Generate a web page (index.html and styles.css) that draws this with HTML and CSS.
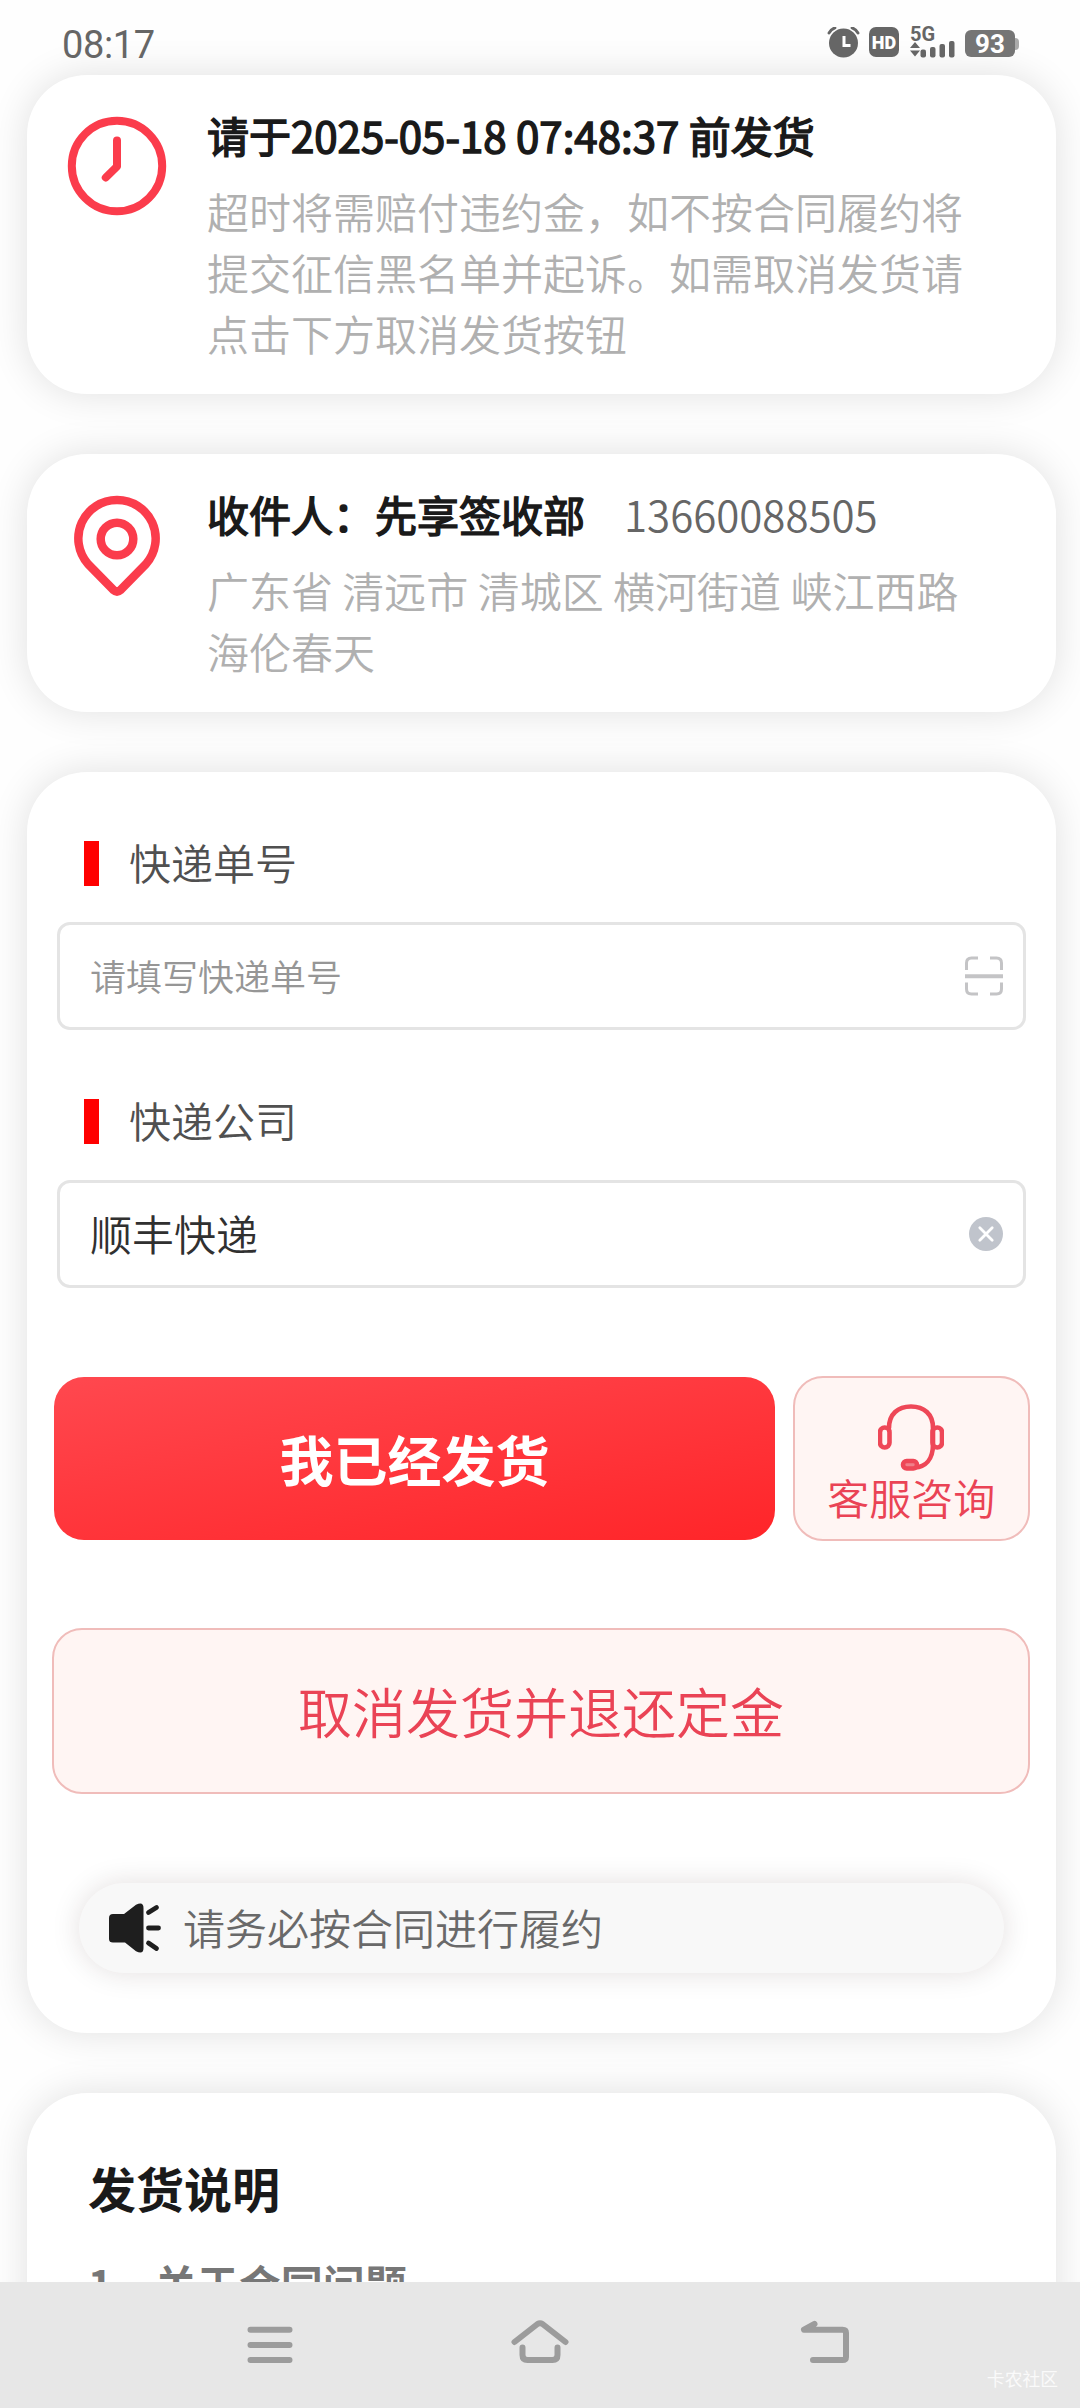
FILE: index.html
```html
<!DOCTYPE html>
<html lang="zh-CN">
<head>
<meta charset="utf-8">
<title>发货</title>
<link rel="stylesheet" href="styles.css">
</head>
<body>
<div class="screen">
  <header class="status">
    <span class="time">08:17</span>
    <div class="status-icons">
      <svg class="alarm" width="33" height="33" viewBox="0 0 33 33">
        <circle cx="16.5" cy="16" r="14.500" fill="#666"/>
        <path d="M2 6Q4 2 8 0.800M31 6Q29 2 25 0.800" fill="none" stroke="#666" stroke-width="2.800" stroke-linecap="round"/>
        <path d="M17 9V18.500H23.500" fill="none" stroke="#fff" stroke-width="3"/>
      </svg>
      <span class="hd">HD</span>
      <div class="signal">
        <span class="net">5G</span>
        <svg width="46" height="17" viewBox="0 0 46 17">
          <path d="M0 7L5 1L10 7ZM0 9.500H10L5 15.500Z" fill="#666"/>
          <rect x="10.500" y="8.500" width="5.500" height="8" rx="2" fill="#666"/>
          <rect x="20" y="6" width="5.500" height="10.500" rx="2" fill="#666"/>
          <rect x="29.500" y="3" width="5.500" height="13.500" rx="2" fill="#666"/>
          <rect x="39" y="0" width="5.500" height="16.500" rx="2" fill="#666"/>
        </svg>
      </div>
      <div class="battery"><span class="level">93</span><span class="cap"></span></div>
    </div>
  </header>

  <section class="card info">
    <svg class="info-icon" width="100" height="100" viewBox="0 0 100 100" fill="none" stroke="#fb3c4c" stroke-width="8" stroke-linecap="round" stroke-linejoin="round">
      <circle cx="50" cy="50" r="45.200"/>
      <path d="M50 24.500V50.500L38.800 61.500"/>
    </svg>
    <div class="info-body">
      <h2 class="info-title">请于2025-05-18 07:48:37 前发货</h2>
      <p class="info-text">超时将需赔付违约金，如不按合同履约将<br>提交征信黑名单并起诉。如需取消发货请<br>点击下方取消发货按钮</p>
    </div>
  </section>

  <section class="card info">
    <svg class="info-icon" width="100" height="102" viewBox="0 0 100 102" fill="none" stroke="#fb3c4c" stroke-width="8.500" stroke-linecap="round" stroke-linejoin="round">
      <path d="M50 5A38.500 38.500 0 0 0 21 69L46.500 95Q50 98 53.500 95L79 69A38.500 38.500 0 0 0 50 5Z"/>
      <circle cx="50" cy="44" r="16.300"/>
    </svg>
    <div class="info-body">
      <h2 class="info-title">收件人：先享签收部<span class="phone">13660088505</span></h2>
      <p class="info-text">广东省 清远市 清城区 横河街道 峡江西路<br>海伦春天</p>
    </div>
  </section>

  <section class="card form">
    <div class="label">快递单号</div>
    <div class="field">
      <span class="placeholder">请填写快递单号</span>
      <svg width="38" height="40" viewBox="0 0 38 40" fill="none" stroke="#c4c4c6" stroke-width="3">
        <path d="M1.500 14V7Q1.500 2 6.500 2H13M25 2H31.500Q36.500 2 36.500 7V14M1.500 26.500V33Q1.500 38 6.500 38H13M25 38H31.500Q36.500 38 36.500 33V26.500"/>
        <path d="M0 20.200H38" stroke-width="4"/>
      </svg>
    </div>
    <div class="label">快递公司</div>
    <div class="field">
      <span class="value">顺丰快递</span>
      <svg width="34" height="34" viewBox="0 0 34 34">
        <circle cx="17" cy="17" r="17" fill="#c0c4cc"/>
        <path d="M10.800 10.800L23.200 23.200M23.200 10.800L10.800 23.200" stroke="#fff" stroke-width="2.800" stroke-linecap="round"/>
      </svg>
    </div>
    <div class="actions">
      <button class="btn primary">我已经发货</button>
      <button class="btn soft service">
        <svg width="66" height="67" viewBox="0 0 66 67" fill="none" stroke="#ee4757" stroke-width="4.600" stroke-linecap="round" stroke-linejoin="round">
          <path d="M11 24C11 10 20 2.500 33 2.500S55 10 55 24V40C55 56 47 63 37 63.500"/>
          <rect x="2" y="23.500" width="9.500" height="20" rx="4.700"/>
          <rect x="54.500" y="23.500" width="9.500" height="20" rx="4.700"/>
          <rect x="25" y="57" width="14" height="7.500" rx="3.700" fill="#f0808a"/>
        </svg>
        <span>客服咨询</span>
      </button>
    </div>
    <button class="btn soft cancel">取消发货并退还定金</button>
    <div class="notice">
      <svg width="52" height="50" viewBox="0 0 52 50">
        <path d="M0 15Q0 11 4 11H15L27 1.800Q34.500-2 34.500 5V45Q34.500 52 27 48.200L16 39.500H4Q0 39.500 0 36Z" fill="#1e1e1e"/>
        <path d="M39.500 9.500L47.500 4.500M39.500 25H49.500M39.500 40L47.500 45.500" stroke="#1e1e1e" stroke-width="4.800" stroke-linecap="round"/>
      </svg>
      <span>请务必按合同进行履约</span>
    </div>
  </section>

  <section class="card guide">
    <h2 class="guide-title">发货说明</h2>
    <p class="guide-item">1、关于合同问题</p>
  </section>
</div>

<nav class="navbar">
  <svg width="60" height="60" viewBox="0 0 60 60"><path d="M10.500 14.700H49.500M10.500 30H49.500M10.500 45H49.500"/></svg>
  <svg width="60" height="60" viewBox="0 0 60 60"><path d="M4.500 27L27.500 9Q30 7.500 32.500 9L55.500 27M12.500 32.500V40Q12.500 45 17.500 45H42.500Q47.500 45 47.500 40V32.500"/></svg>
  <svg width="60" height="60" viewBox="15 0 60 60"><path d="M34.500 9L24 14.700H62.500Q66 14.700 66 18V42Q66 45 62.500 45H33"/></svg>
  <span class="mark">卡农社区</span>
</nav>
</body>
</html>
```
FILE: styles.css
```css
* { box-sizing: border-box; }

body {
  margin: 0;
  width: 1080px;
  height: 2408px;
  overflow: hidden;
  background: #fefefe;
  font-family: "Noto Sans CJK SC", sans-serif;
  font-size: 42px;
  line-height: 61px;
}

h2, p { margin: 0; font-size: inherit; font-weight: 400; }
svg { display: block; flex: none; }

.screen { height: 2282px; overflow: hidden; }

/* status bar */
.status {
  display: flex;
  justify-content: space-between;
  height: 74.500px;
  padding: 27px 61px 0 62px;
  color: #666;
}
.time {
  font: 400 38px/36px Roboto, sans-serif;
  letter-spacing: -0.400px;
}
.status-icons { display: flex; align-items: flex-start; }
.hd {
  width: 30px;
  height: 30px;
  margin-left: 9px;
  border-radius: 7px;
  background: #666;
  color: #fff;
  font: 900 18px/31px Roboto, sans-serif;
  text-align: center;
}
.signal {
  display: flex;
  flex-direction: column;
  width: 46px;
  margin-left: 11px;
}
.net { height: 14px; font: 700 20px/15px Roboto, sans-serif; }
.battery { display: flex; align-items: center; margin: 3px 0 0 9px; }
.level {
  width: 50px;
  height: 27px;
  border-radius: 6px;
  background: #757575;
  color: #fff;
  font: 700 26px/28px Roboto, sans-serif;
  text-align: center;
}
.cap { width: 4px; height: 12px; border-radius: 0 4px 4px 0; background: #aaa; }

/* cards */
.card {
  width: 1028.500px;
  margin: 0 0 59.500px 27px;
  border-radius: 60px;
  background: #fff;
  box-shadow: 0 0 38px rgba(0, 0, 0, 0.120);
}
.info { display: flex; padding: 29px 40px 31px; }
.info-icon { margin: 12px 40px 0 0; }
.info-title { color: #1a1a1a; -webkit-text-stroke: 1.500px #1a1a1a; }
.info-text { margin-top: 15.500px; color: #b0b0b0; font-weight: 350; }
.phone { margin-left: 39px; color: #666; font-weight: 350; -webkit-text-stroke: 0; }

/* form */
.form { height: 1261.500px; padding: 61px 25px 0; }
.label {
  display: flex;
  align-items: center;
  height: 61px;
  margin-left: 32px;
  padding-bottom: 3px;
  color: #505050;
  font-weight: 350;
  line-height: 58px;
}
.label::before {
  content: "";
  width: 15px;
  height: 45px;
  margin: 3px 30px 0 0;
  background: #f00;
}
.field {
  display: flex;
  align-items: center;
  justify-content: space-between;
  width: 969px;
  height: 108px;
  margin: 28px 0 61px 5px;
  padding: 0 20.500px 0 30px;
  border: 3px solid #e4e4e4;
  border-radius: 13px;
}
.placeholder { color: #969696; font-size: 36px; font-weight: 350; }
.value { padding-bottom: 2px; color: #303030; font-weight: 350; }

.actions { display: flex; align-items: center; margin-top: 88.500px; }
.btn {
  padding: 0;
  border: 0;
  border-radius: 30px;
  font: 400 54px/78px "Noto Sans CJK SC", sans-serif;
}
.primary {
  width: 721px;
  height: 162.500px;
  margin: 0 18px 0 2px;
  background: linear-gradient(170deg, #ff484f, #ff2529);
  color: #fff;
  font-weight: 700;
}
.soft { border: 2px solid #f0bcba; background: #fff5f3; color: #ea4355; font-weight: 350; }
.service {
  display: flex;
  flex-direction: column;
  align-items: center;
  width: 236.500px;
  height: 165px;
  padding-top: 26px;
  font-size: 42px;
  line-height: 51px;
}
.cancel { display: block; width: 978px; height: 166px; margin-top: 87px; }
.notice {
  display: flex;
  align-items: center;
  width: 925px;
  height: 90px;
  margin: 88.500px 0 0 27px;
  padding-left: 30px;
  border-radius: 45px;
  background: #f8f8f8;
  box-shadow: 0 0 29px rgba(40, 0, 0, 0.130);
  color: #696969;
  font-weight: 350;
}
.notice span { margin-left: 22px; padding-bottom: 2px; }

.guide { height: 500px; padding: 59px 61px; }
.guide-title { color: #1a1a1a; font-size: 48px; font-weight: 700; line-height: 70px; }
.guide-item { margin-top: 30px; color: #777; font-weight: 700; }

/* system navigation */
.navbar {
  position: relative;
  display: flex;
  justify-content: center;
  gap: 210px;
  height: 126px;
  padding-top: 33px;
  background: #e7e7e7;
}
.navbar path { fill: none; stroke: #9c9c9c; stroke-width: 6px; stroke-linecap: round; stroke-linejoin: round; }
.navbar svg:nth-child(3) { margin-left: 15px; margin-right: -15px; }
.mark {
  position: absolute;
  right: 22px;
  bottom: 17px;
  color: #fafafa;
  font-size: 17.800px;
  line-height: 26px;
}
```
